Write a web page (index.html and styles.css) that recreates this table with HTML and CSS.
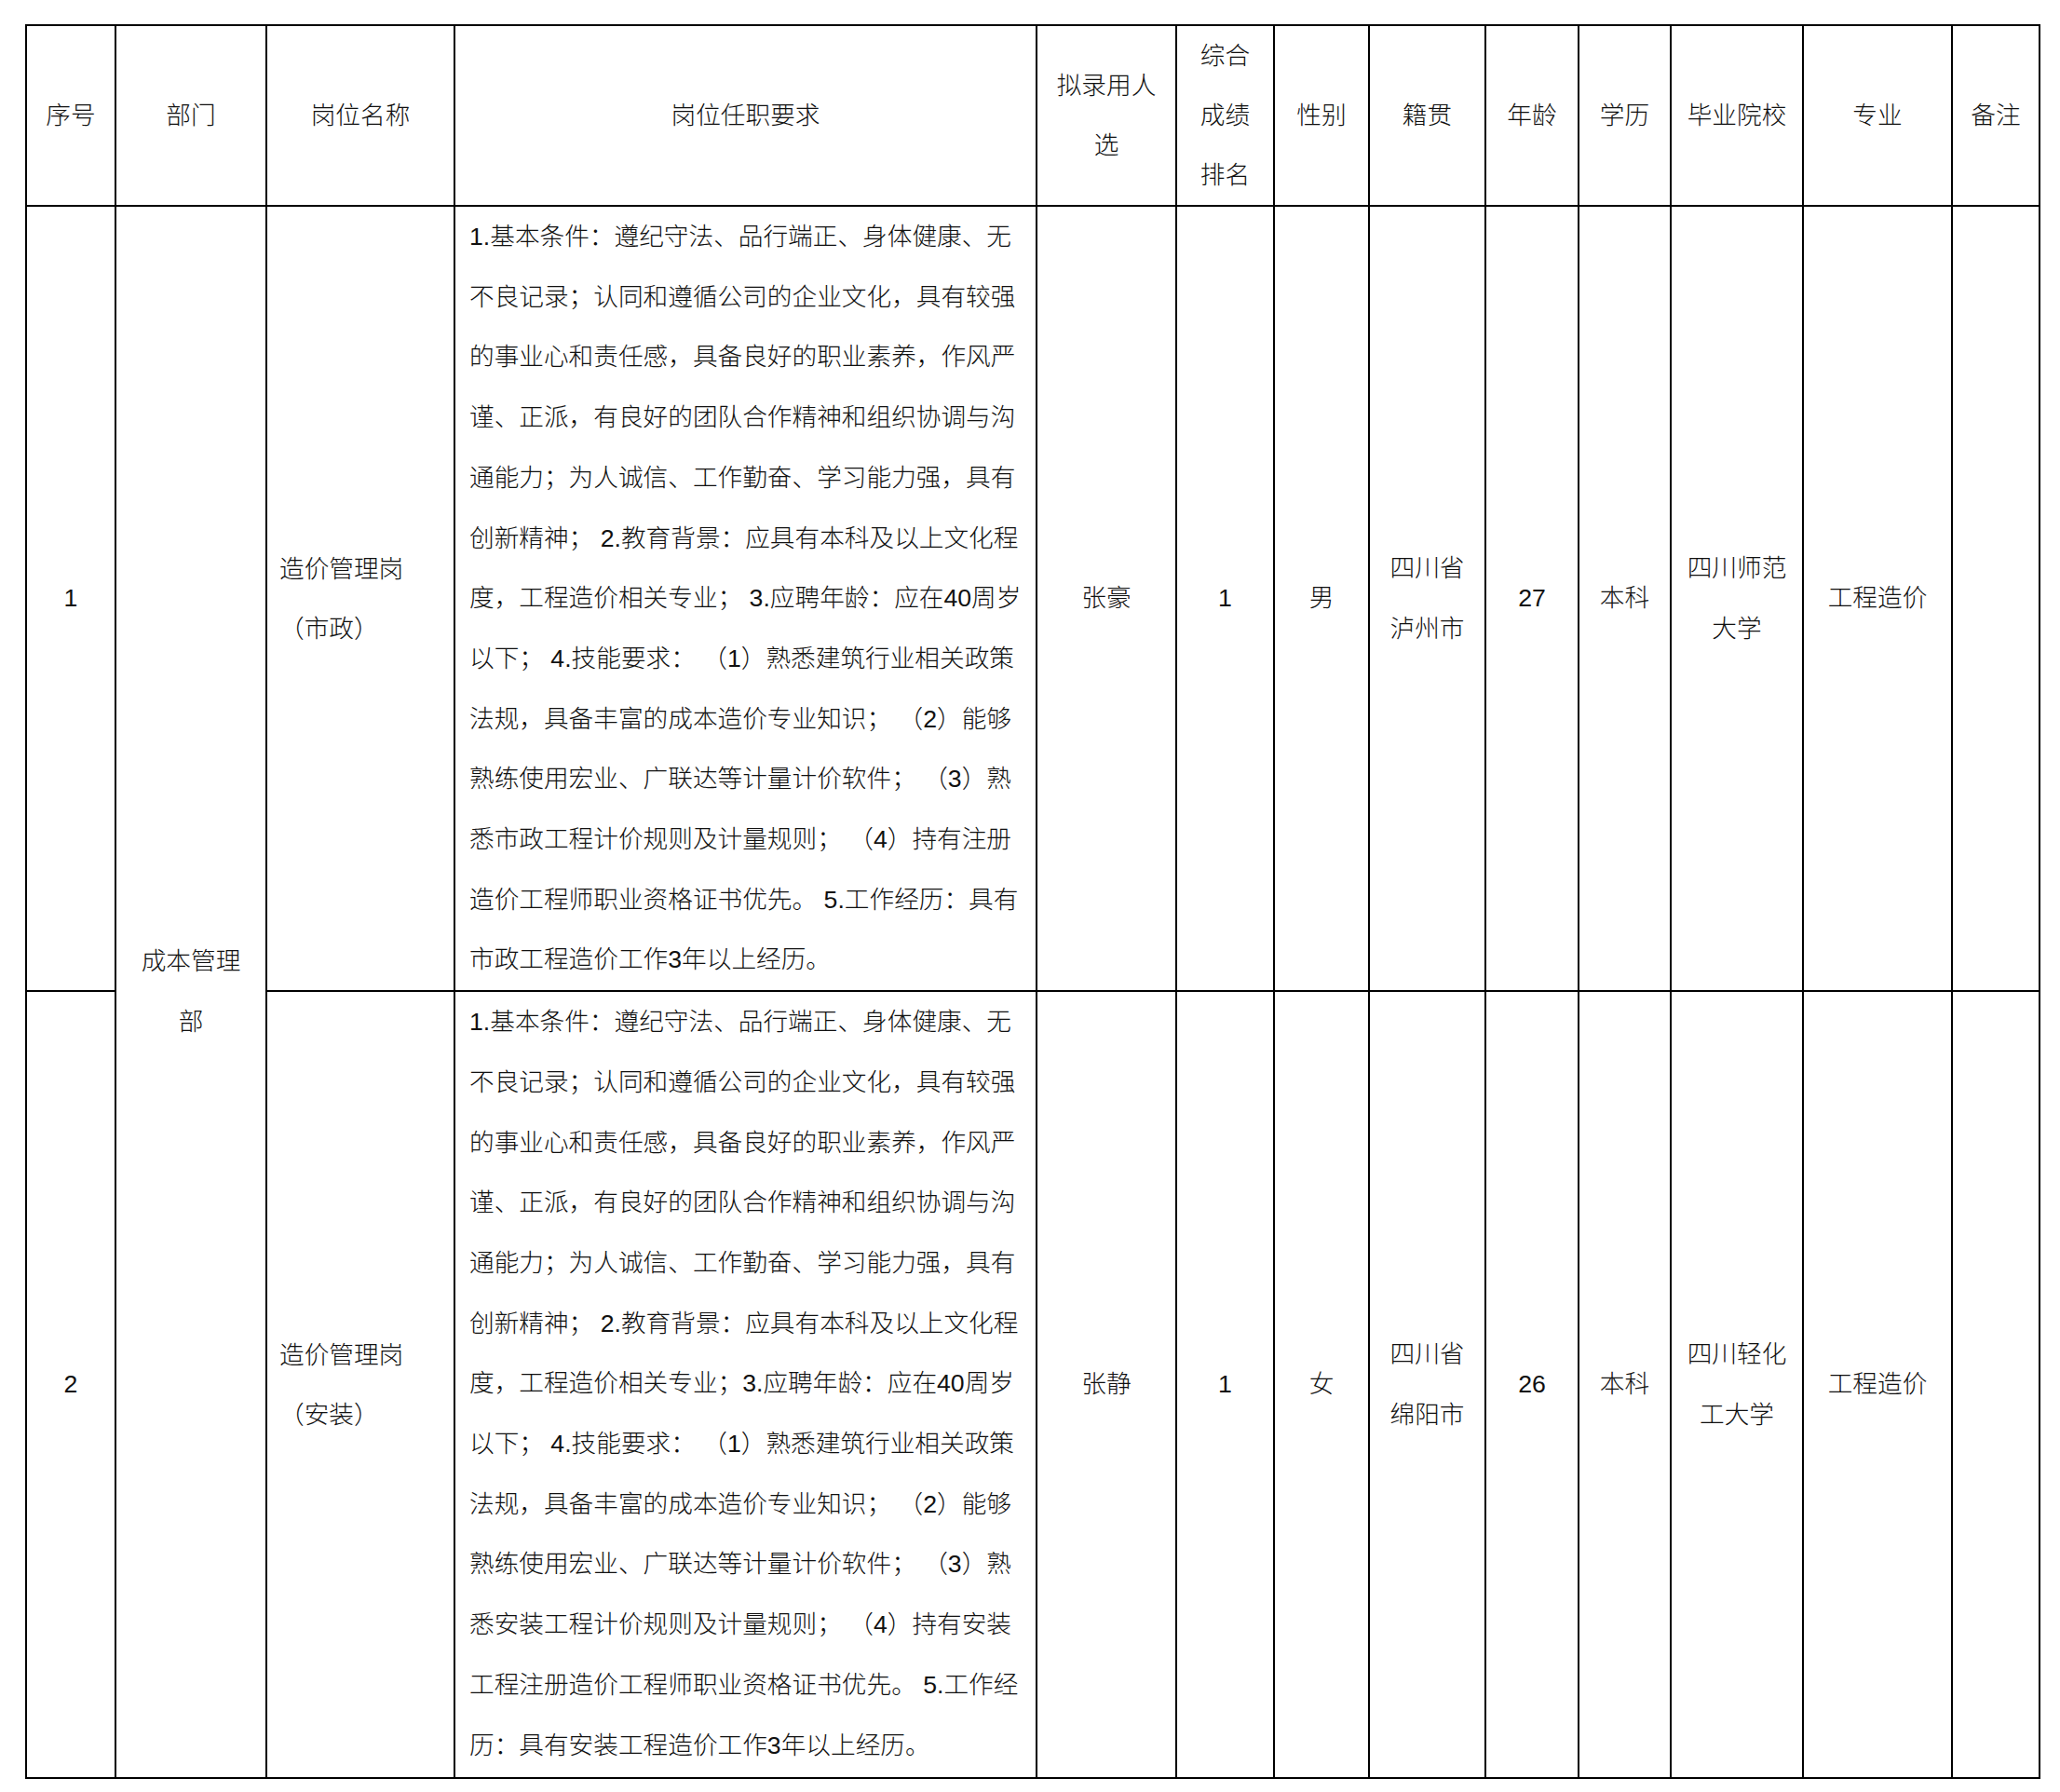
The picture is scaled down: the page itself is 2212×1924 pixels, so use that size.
FILE: index.html
```html
<!DOCTYPE html>
<html lang="zh-CN">
<head>
<meta charset="utf-8">
<title>拟录用人员名单</title>
<link rel="stylesheet" href="styles.css">
</head>
<body>
<table class="sheet">
  <colgroup>
    <col class="c-no"><col class="c-dept"><col class="c-post"><col class="c-req"><col class="c-name"><col class="c-rank"><col class="c-sex"><col class="c-home"><col class="c-age"><col class="c-edu"><col class="c-school"><col class="c-major"><col class="c-note">
  </colgroup>
  <thead>
    <tr class="head-row">
      <th>序号</th>
      <th>部门</th>
      <th>岗位名称</th>
      <th>岗位任职要求</th>
      <th>拟录用人<br>选</th>
      <th>综合<br>成绩<br>排名</th>
      <th>性别</th>
      <th>籍贯</th>
      <th>年龄</th>
      <th>学历</th>
      <th>毕业院校</th>
      <th>专业</th>
      <th>备注</th>
    </tr>
  </thead>
  <tbody>
    <tr class="row-1">
      <td class="center">1</td>
      <td class="center" rowspan="2">成本管理<br>部</td>
      <td class="post">造价管理岗<br>（市政）</td>
      <td class="req">1.基本条件：遵纪守法、品行端正、身体健康、无<br>不良记录；认同和遵循公司的企业文化，具有较强<br>的事业心和责任感，具备良好的职业素养，作风严<br>谨、正派，有良好的团队合作精神和组织协调与沟<br>通能力；为人诚信、工作勤奋、学习能力强，具有<br>创新精神； 2.教育背景：应具有本科及以上文化程<br>度，工程造价相关专业；   3.应聘年龄：应在40周岁<br>以下；  4.技能要求：  （1）熟悉建筑行业相关政策<br>法规，具备丰富的成本造价专业知识；  （2）能够<br>熟练使用宏业、广联达等计量计价软件；  （3）熟<br>悉市政工程计价规则及计量规则；  （4）持有注册<br>造价工程师职业资格证书优先。 5.工作经历：具有<br>市政工程造价工作3年以上经历。</td>
      <td class="center">张豪</td>
      <td class="center">1</td>
      <td class="center">男</td>
      <td class="center">四川省<br>泸州市</td>
      <td class="center">27</td>
      <td class="center">本科</td>
      <td class="center">四川师范<br>大学</td>
      <td class="center">工程造价</td>
      <td class="center"></td>
    </tr>
    <tr class="row-2">
      <td class="center">2</td>
      <td class="post">造价管理岗<br>（安装）</td>
      <td class="req">1.基本条件：遵纪守法、品行端正、身体健康、无<br>不良记录；认同和遵循公司的企业文化，具有较强<br>的事业心和责任感，具备良好的职业素养，作风严<br>谨、正派，有良好的团队合作精神和组织协调与沟<br>通能力；为人诚信、工作勤奋、学习能力强，具有<br>创新精神； 2.教育背景：应具有本科及以上文化程<br>度，工程造价相关专业；3.应聘年龄：应在40周岁<br>以下；  4.技能要求：  （1）熟悉建筑行业相关政策<br>法规，具备丰富的成本造价专业知识；  （2）能够<br>熟练使用宏业、广联达等计量计价软件；  （3）熟<br>悉安装工程计价规则及计量规则；  （4）持有安装<br>工程注册造价工程师职业资格证书优先。 5.工作经<br>历：具有安装工程造价工作3年以上经历。</td>
      <td class="center">张静</td>
      <td class="center">1</td>
      <td class="center">女</td>
      <td class="center">四川省<br>绵阳市</td>
      <td class="center">26</td>
      <td class="center">本科</td>
      <td class="center">四川轻化<br>工大学</td>
      <td class="center">工程造价</td>
      <td class="center"></td>
    </tr>
  </tbody>
</table>
</body>
</html>
```

FILE: styles.css
```css
html, body {
  margin: 0;
  padding: 0;
  background: #ffffff;
}

body {
  padding: 26px 0 0 27px;
  font-family: "Liberation Sans", "Noto Sans CJK SC", sans-serif;
  font-size: 26.67px;
  font-weight: 300;
  color: #111111;
}

.sheet {
  border-collapse: collapse;
  table-layout: fixed;
  width: 2164px;
  border: 2px solid #000;
}

.sheet th,
.sheet td {
  border: 2px solid #000;
  padding: 0;
  vertical-align: middle;
  white-space: nowrap;
  overflow: hidden;
}

.sheet th {
  font-weight: 300;
  text-align: center;
  line-height: 64px;
}

.c-no { width: 96px; }
.c-dept { width: 162px; }
.c-post { width: 202px; }
.c-req { width: 625px; }
.c-name { width: 150px; }
.c-rank { width: 105px; }
.c-sex { width: 102px; }
.c-home { width: 125px; }
.c-age { width: 100px; }
.c-edu { width: 99px; }
.c-school { width: 142px; }
.c-major { width: 160px; }
.c-note { width: 94px; }

.head-row {
  height: 194px;
}

.row-1 {
  height: 843px;
}

.row-2 {
  height: 845px;
}

.center {
  text-align: center;
  line-height: 64.7px;
}

.post {
  text-align: left;
  padding-left: 13px !important;
  line-height: 64px;
}

.req {
  text-align: left;
  white-space: pre;
  padding-left: 15px !important;
  line-height: 64.7px;
  vertical-align: top !important;
}
```
